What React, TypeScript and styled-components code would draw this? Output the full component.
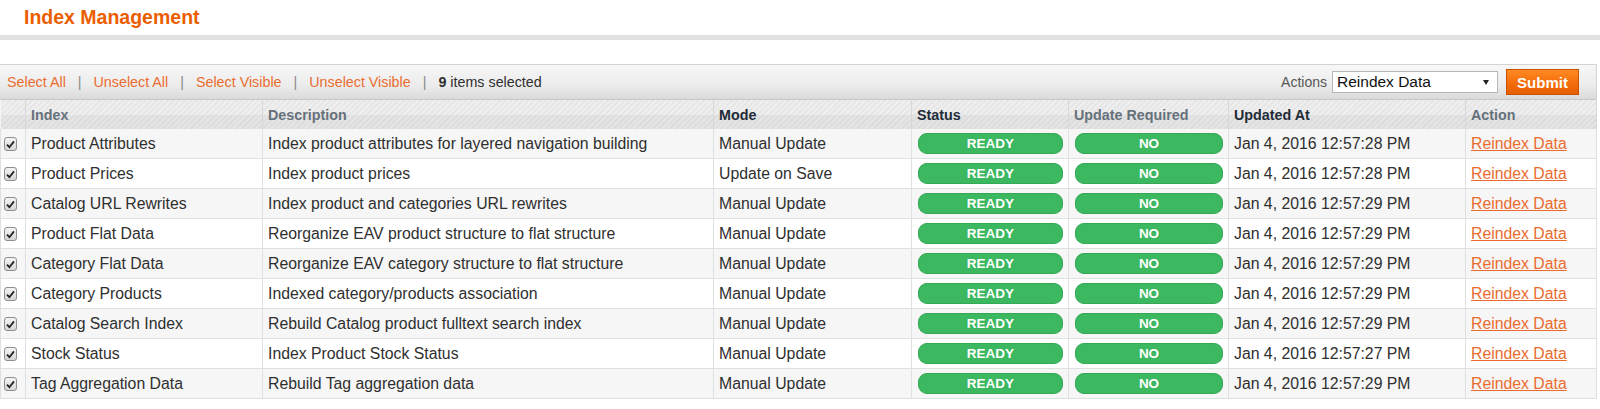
import styled, { createGlobalStyle } from 'styled-components';

const GlobalStyle = createGlobalStyle`
  html, body {
    margin: 0;
    padding: 0;
    background: #fff;
    font-family: "Liberation Sans", Arial, sans-serif;
    color: #2f2f2f;
  }
`;

const Page = styled.div`
  width: 1600px;
`;

const TitleBar = styled.div`
  height: 40px;
  padding: 0 0 1px 24px;
  display: flex;
  align-items: center;
  border-bottom: 5px solid #e1e1e1;
  box-sizing: border-box;
`;

const Title = styled.h1`
  margin: 0;
  font-family: "Liberation Sans", Arial, sans-serif;
  font-size: 19.5px;
  font-weight: bold;
  color: #eb5e00;
`;

const Spacer = styled.div`
  height: 24px;
`;

const Grid = styled.div`
  width: 1597px;
  border-top: 1px solid #d4d4d4;
  border-right: 1px solid #d4d4d4;
  box-sizing: border-box;
`;

const Toolbar = styled.div`
  height: 34px;
  display: flex;
  align-items: center;
  justify-content: space-between;
  padding: 0 17px 0 7px;
  background: linear-gradient(to bottom, #f7f7f7 0%, #ececec 60%, #dadada 100%);
  border-bottom: 1px solid #c8c8c8;
  font-size: 14.3px;
`;

const Massaction = styled.div`
  display: flex;
  align-items: center;
`;

const MassLink = styled.span`
  color: #eb6c2e;
`;

const Sep = styled.span`
  color: #888;
  margin: 0 12px;
`;

const Count = styled.span`
  color: #2f2f2f;
  b {
    font-weight: bold;
  }
`;

const ActionsBox = styled.div`
  display: flex;
  align-items: center;
  gap: 4px;
`;

const ActionsLabel = styled.span`
  color: #555;
  font-size: 14px;
  margin-right: 1px;
`;

const Select = styled.div`
  width: 166px;
  height: 22px;
  box-sizing: border-box;
  border: 1px solid #b7b7b7;
  background: #fff;
  display: flex;
  align-items: center;
  justify-content: space-between;
  padding: 0 8px 0 4px;
  font-size: 15.5px;
  color: #111;
  margin-right: 4px;
`;

const Caret = styled.span`
  width: 0;
  height: 0;
  border-left: 3px solid transparent;
  border-right: 3px solid transparent;
  border-top: 5px solid #222;
`;

const SubmitButton = styled.button`
  width: 73px;
  height: 26px;
  border: 1px solid #c95200;
  background: linear-gradient(to bottom, #ff8a22 0%, #f46d0c 55%, #e55f00 100%);
  color: #fff;
  font-family: "Liberation Sans", Arial, sans-serif;
  font-weight: bold;
  font-size: 15px;
  padding: 0;
  cursor: pointer;
`;

const Table = styled.table`
  border-collapse: collapse;
  table-layout: fixed;
  width: 1596px;
`;

const HeadCell = styled.th<{ $dark?: boolean }>`
  height: 29px;
  padding: 0 5px;
  text-align: left;
  font-size: 14.3px;
  font-weight: bold;
  color: ${({ $dark }) => ($dark ? '#1f2b38' : '#65717b')};
  border-left: 1px solid #f5f5f5;
  border-right: 1px solid #d7d7d7;
  background:
    linear-gradient(to bottom, rgba(255, 255, 255, 0) 52%, rgba(0, 0, 0, 0.045) 52%),
    repeating-linear-gradient(-45deg, #efefef 0px, #efefef 2px, #e6e6e6 2px, #e6e6e6 4px);
  white-space: nowrap;
  overflow: hidden;
`;

const Row = styled.tr<{ $odd: boolean }>`
  background: ${({ $odd }) => ($odd ? '#f6f6f6' : '#fff')};
`;

const Cell = styled.td`
  height: 29px;
  padding: 0 5px;
  font-size: 15.8px;
  border: 1px solid #dde1e2;
  border-top: none;
  white-space: nowrap;
  overflow: hidden;
`;

const CheckCell = styled(Cell)`
  padding: 0 0 0 3px;
`;

const Check = styled.span`
  display: inline-flex;
  align-items: center;
  justify-content: center;
  width: 13px;
  height: 14px;
  box-sizing: border-box;
  border: 1px solid #8f8f8f;
  border-radius: 3px;
  background: linear-gradient(to bottom, #f4f4f4, #d6d6d6);
  vertical-align: middle;
`;

const BadgeCell = styled(Cell)`
  padding: 0 5px 0 6px;
`;

const Badge = styled.div`
  height: 21px;
  border-radius: 9px;
  background: #3cb861;
  border: 1px solid #33a855;
  box-sizing: border-box;
  color: #fff;
  font-size: 13.5px;
  font-weight: bold;
  display: flex;
  align-items: center;
  justify-content: center;
`;

const ReindexLink = styled.a`
  color: #eb6c2e;
  text-decoration: underline;
`;

const rows = [
  ['Product Attributes', 'Index product attributes for layered navigation building', 'Manual Update', 'Jan 4, 2016 12:57:28 PM'],
  ['Product Prices', 'Index product prices', 'Update on Save', 'Jan 4, 2016 12:57:28 PM'],
  ['Catalog URL Rewrites', 'Index product and categories URL rewrites', 'Manual Update', 'Jan 4, 2016 12:57:29 PM'],
  ['Product Flat Data', 'Reorganize EAV product structure to flat structure', 'Manual Update', 'Jan 4, 2016 12:57:29 PM'],
  ['Category Flat Data', 'Reorganize EAV category structure to flat structure', 'Manual Update', 'Jan 4, 2016 12:57:29 PM'],
  ['Category Products', 'Indexed category/products association', 'Manual Update', 'Jan 4, 2016 12:57:29 PM'],
  ['Catalog Search Index', 'Rebuild Catalog product fulltext search index', 'Manual Update', 'Jan 4, 2016 12:57:29 PM'],
  ['Stock Status', 'Index Product Stock Status', 'Manual Update', 'Jan 4, 2016 12:57:27 PM'],
  ['Tag Aggregation Data', 'Rebuild Tag aggregation data', 'Manual Update', 'Jan 4, 2016 12:57:29 PM'],
];

const columns = [25, 237, 451, 198, 157, 160, 237, 131];

const CheckMark = () => (
  <svg width="9" height="9" viewBox="0 0 9 9">
    <path d="M1 4.6 L3.4 7.2 L8 1.4" fill="none" stroke="#222" strokeWidth="1.8" />
  </svg>
);

export default function App() {
  return (
    <Page>
      <GlobalStyle />
      <TitleBar>
        <Title>Index Management</Title>
      </TitleBar>
      <Spacer />
      <Grid>
        <Toolbar>
          <Massaction>
            <MassLink>Select All</MassLink>
            <Sep>|</Sep>
            <MassLink>Unselect All</MassLink>
            <Sep>|</Sep>
            <MassLink>Select Visible</MassLink>
            <Sep>|</Sep>
            <MassLink>Unselect Visible</MassLink>
            <Sep>|</Sep>
            <Count>
              <b>9</b> items selected
            </Count>
          </Massaction>
          <ActionsBox>
            <ActionsLabel>Actions</ActionsLabel>
            <Select>
              Reindex Data
              <Caret />
            </Select>
            <SubmitButton>Submit</SubmitButton>
          </ActionsBox>
        </Toolbar>
        <Table>
          <colgroup>
            {columns.map((w, i) => (
              <col key={i} style={{ width: w }} />
            ))}
          </colgroup>
          <thead>
            <tr>
              <HeadCell />
              <HeadCell>Index</HeadCell>
              <HeadCell>Description</HeadCell>
              <HeadCell $dark>Mode</HeadCell>
              <HeadCell $dark>Status</HeadCell>
              <HeadCell>Update Required</HeadCell>
              <HeadCell $dark>Updated At</HeadCell>
              <HeadCell>Action</HeadCell>
            </tr>
          </thead>
          <tbody>
            {rows.map((r, i) => (
              <Row key={i} $odd={i % 2 === 0}>
                <CheckCell>
                  <Check>
                    <CheckMark />
                  </Check>
                </CheckCell>
                <Cell>{r[0]}</Cell>
                <Cell>{r[1]}</Cell>
                <Cell>{r[2]}</Cell>
                <BadgeCell>
                  <Badge>READY</Badge>
                </BadgeCell>
                <BadgeCell>
                  <Badge>NO</Badge>
                </BadgeCell>
                <Cell>{r[3]}</Cell>
                <Cell>
                  <ReindexLink href="#">Reindex Data</ReindexLink>
                </Cell>
              </Row>
            ))}
          </tbody>
        </Table>
      </Grid>
    </Page>
  );
}
